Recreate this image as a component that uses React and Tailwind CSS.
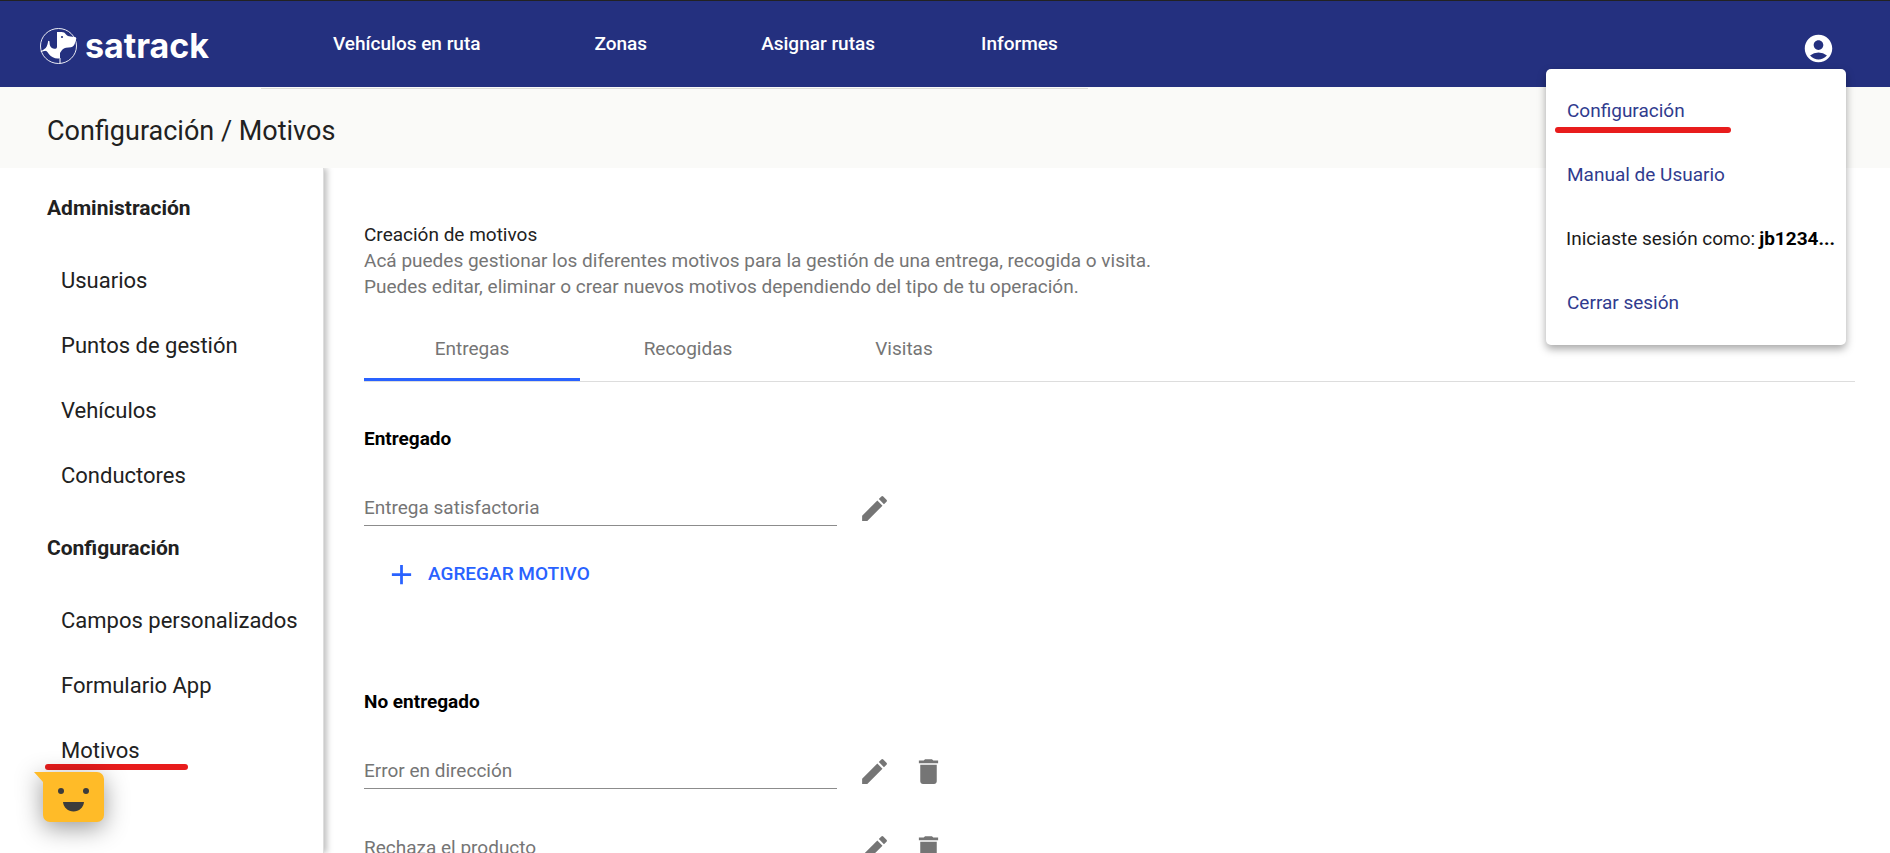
import { useState } from "react";
import { MdAccountCircle, MdAdd, MdDelete, MdEdit } from "react-icons/md";

const navLinks = ["Vehículos en ruta", "Zonas", "Asignar rutas", "Informes"];

const sections = [
  {
    title: "Administración",
    items: ["Usuarios", "Puntos de gestión", "Vehículos", "Conductores"],
  },
  {
    title: "Configuración",
    items: ["Campos personalizados", "Formulario App", "Motivos"],
  },
];

const tabs = ["Entregas", "Recogidas", "Visitas"];

const groups = [
  { title: "Entregado", fields: ["Entrega satisfactoria"], canAdd: true },
  { title: "No entregado", fields: ["Error en dirección", "Rechaza el producto"], removable: true },
];

const Marker = ({ className }) => (
  <span aria-hidden="true" className={`absolute h-1.5 rounded-full bg-[#e81c1c] ${className}`} />
);

const Logo = () => (
  <a href="#" className="flex items-center gap-2 text-white">
    <svg viewBox="0 0 37 36" className="h-9 w-[37px]" aria-hidden="true">
      <ellipse cx="18.5" cy="18" rx="18" ry="17.5" fill="none" stroke="currentColor" strokeWidth="0.9" />
      <path
        fill="currentColor"
        d="M17 4h4.500c2 0 3.500.8 4.500 2.500 1 1.300 2.500 1.800 4.500 2l4.500.5c1.800.3 1.600 2.500.4 3.200-.2 4-1.600 6.300-4.400 7L26 19.800c-2.500.5-3.500 1.500-4.500 3L20 25v5.200c-4.500.8-8.500-.8-11-4-1.200-1.500-2-3.200-3.200-3.500L2 23.300c.8-1.800 2.500-2 3.700-3.300 1.600-1.800 2-4.300 2.500-7.300l1.300.6c.1 2.500.2 4.500 1.500 6 1.200 1.200 3 1.500 4.500 1.500 1.200-.3 1.500-1.200 1.500-2.300z"
      />
      <path d="M20 30v5.500" stroke="currentColor" strokeWidth="1" />
      <path d="M.7 23.500L6 22" stroke="currentColor" strokeWidth="0.8" />
      <circle cx="22" cy="9" r="1.100" fill="#24307f" />
    </svg>
    <span className="w-32 font-[Inter,sans-serif] text-[34px] leading-9 font-bold">satrack</span>
  </a>
);

const UserMenu = () => (
  <div className="absolute top-[69px] right-11 z-20 flex w-[300px] flex-col rounded-[5px] bg-white py-2.5 text-[19px] leading-7 whitespace-nowrap text-[#303b8e] shadow-[0_4px_8px_rgba(0,0,0,0.35)]">
    <a href="#" className="relative flex h-16 items-center px-[21px]">
      Configuración
      <Marker className="top-12 left-[9px] w-44" />
    </a>
    <a href="#" className="flex h-16 items-center px-[21px]">Manual de Usuario</a>
    <p className="flex h-16 items-center gap-1 px-5 text-[#1a1a1a]">
      Iniciaste sesión como: <b className="text-black">jb1234...</b>
    </p>
    <a href="#" className="flex h-16 items-center px-[21px]">Cerrar sesión</a>
  </div>
);

const FeedbackButton = () => (
  <button type="button" aria-label="Feedback" className="absolute bottom-[31px] left-[34px] z-10">
    <svg viewBox="0 0 70 50" className="h-[50px] w-[70px] drop-shadow-[0_6px_12px_rgba(0,0,0,0.4)]">
      <path d="M0 0h63a7 7 0 0 1 7 7v36a7 7 0 0 1-7 7H16a7 7 0 0 1-7-7V10z" fill="#ffbb28" />
      <circle cx="27" cy="19" r="3" fill="#3c3c3c" />
      <circle cx="52" cy="19" r="3" fill="#3c3c3c" />
      <path d="M29 30h21c-.5 5.500-5 9.500-10.500 9.500S29.500 35.500 29 30z" fill="#3c3c3c" />
    </svg>
  </button>
);

function Field({ label, removable }) {
  return (
    <div className="flex h-9 items-center text-[#757575]">
      <input
        aria-label={label}
        defaultValue={label}
        className="h-9 w-[473px] border-b border-[#8c8c8c] bg-transparent text-[19px] outline-none"
      />
      <button type="button" aria-label={`Editar ${label}`} className="ml-[21px]">
        <MdEdit size={33} />
      </button>
      {removable && (
        <button type="button" aria-label={`Eliminar ${label}`} className="ml-[21px]">
          <MdDelete size={33} />
        </button>
      )}
    </div>
  );
}

export default function App() {
  const [active, setActive] = useState("Entregas");

  return (
    <div className="relative flex h-screen flex-col overflow-hidden bg-white font-[Roboto,sans-serif] text-[#212121]">
      <header className="flex h-[87px] shrink-0 items-center border-t border-[#222] bg-[#24307f] px-10 pt-1 text-white">
        <Logo />
        <nav className="ml-30 flex gap-[114px] pb-1 text-[19px] leading-7 font-medium whitespace-nowrap">
          {navLinks.map((link) => (
            <a key={link} href="#" className="last:-ml-2">{link}</a>
          ))}
        </nav>
        <button type="button" aria-label="Cuenta" className="mr-[15px] ml-auto pt-1">
          <MdAccountCircle size={33} />
        </button>
      </header>
      <UserMenu />

      <div className="relative z-10 h-[81px] shrink-0 bg-[#fafaf8] pt-px">
        <div className="ml-[261px] h-px w-[827px] bg-[#dcddd6]" />
        <h1 className="px-[47px] pt-6 text-[27px] leading-9">Configuración / Motivos</h1>
      </div>

      <div className="flex min-h-0 flex-1">
        <aside className="w-[324px] shrink-0 border-r border-[#dedede] shadow-[3px_0_6px_rgba(0,0,0,0.25)]">
          {sections.map((section) => (
            <section key={section.title} className="pt-6 pl-[47px]">
              <h2 className="text-[21px] leading-8 font-bold">{section.title}</h2>
              <ul className="pt-6">
                {section.items.map((item) => (
                  <li key={item} className="relative flex h-[65px] items-center pl-3.5 text-[22px] leading-8 whitespace-nowrap">
                    <a href="#">{item}</a>
                    {item === "Motivos" && <Marker className="top-[46px] -left-0.5 w-[143px]" />}
                  </li>
                ))}
              </ul>
            </section>
          ))}
        </aside>

        <main className="min-w-0 flex-1 pt-[54px] pr-[35px] pl-10 text-[19px]">
          <h2 className="leading-[26px]">Creación de motivos</h2>
          <p className="leading-[26px] text-[#757575]">
            Acá puedes gestionar los diferentes motivos para la gestión de una entrega, recogida o visita.
            <br />
            Puedes editar, eliminar o crear nuevos motivos dependiendo del tipo de tu operación.
          </p>

          <div role="tablist" className="mt-4 mb-[43px] flex border-b border-[#ddd]">
            {tabs.map((tab) => (
              <button
                key={tab}
                role="tab"
                type="button"
                aria-selected={active === tab}
                onClick={() => setActive(tab)}
                className={`h-[65px] w-54 border-b-3 pt-1 text-[#757575] ${
                  active === tab ? "border-[#2962ff]" : "border-transparent"
                }`}
              >
                {tab}
              </button>
            ))}
          </div>

          <div className="flex flex-col gap-[97px]">
            {groups.map((group) => (
              <section key={group.title}>
                <h3 className="leading-7 font-bold text-black">{group.title}</h3>
                <div className="mt-[37px] flex flex-col gap-[41px]">
                  {group.fields.map((label) => (
                    <Field key={label} label={label} removable={group.removable} />
                  ))}
                </div>
                {group.canAdd && (
                  <button type="button" className="mt-8 ml-[21px] flex items-center gap-2.5 font-medium text-[#2962ff]">
                    <MdAdd size={33} />
                    AGREGAR MOTIVO
                  </button>
                )}
              </section>
            ))}
          </div>
        </main>
      </div>
      <FeedbackButton />
    </div>
  );
}
